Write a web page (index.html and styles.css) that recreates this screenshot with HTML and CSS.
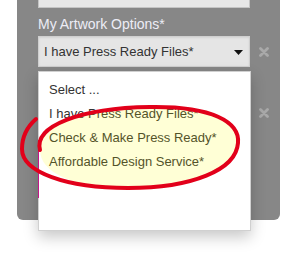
FILE: index.html
```html
<!DOCTYPE html>
<html>
<head>
<meta charset="utf-8">
<link rel="stylesheet" href="styles.css">
</head>
<body>
<div class="page">
  <div class="panel">
    <div class="field-top"></div>
    <div class="label">My Artwork Options*</div>
    <div class="row">
      <div class="select">
        <span class="select-text">I have Press Ready Files*</span>
        <svg class="caret" width="9" height="5" viewBox="0 0 9 5"><path d="M0 0H9L4.5 5Z" fill="#111"/></svg>
      </div>
      <svg class="remove" width="10" height="10" viewBox="0 0 10 10"><path d="M1.5 1.5L8.5 8.5M8.5 1.5L1.5 8.5" stroke="#a9a9a9" stroke-width="2.8" stroke-linecap="round"/></svg>
    </div>
    <div class="row row2">
      <div class="select hidden-select"></div>
      <svg class="remove" width="10" height="10" viewBox="0 0 10 10"><path d="M1.5 1.5L8.5 8.5M8.5 1.5L1.5 8.5" stroke="#a9a9a9" stroke-width="2.8" stroke-linecap="round"/></svg>
    </div>
    <div class="textarea"></div>
  </div>

  <ul class="menu">
    <li>Select ...</li>
    <li>I have Press Ready Files*</li>
    <li>Check &amp; Make Press Ready*</li>
    <li>Affordable Design Service*</li>
  </ul>

  <svg class="annotation" width="293" height="255" viewBox="0 0 293 255">
    <path d="M40 150 C 34 126 80 108 150 107 C 212 106 240 122 238 143 C 236 170 192 188 128 188 C 72 188 40 172 40 150 Z"
          fill="#ffff00" fill-opacity="0.16" stroke="none"/>
    <path d="M40 150 C 34 126 80 108 150 107 C 212 106 240 122 238 143 C 236 170 192 188 128 188 C 66 188 22 172 22 149 C 22 136 28 126 36 119"
          fill="none" stroke="#e2001a" stroke-width="4" stroke-linecap="round"/>
  </svg>
</div>
</body>
</html>
```
FILE: styles.css
```css
html, body {
  margin: 0;
  padding: 0;
  background: #ffffff;
}

.page {
  position: relative;
  width: 293px;
  height: 255px;
  overflow: hidden;
  font-family: "Liberation Sans", Arial, sans-serif;
}

.panel {
  margin-left: 17px;
  width: 263px;
  height: 220px;
  box-sizing: border-box;
  background: #878787;
  border-radius: 0 0 6px 6px;
  padding: 0 0 0 21px;
  display: flex;
  flex-direction: column;
}

.field-top {
  width: 212px;
  height: 8px;
  box-sizing: border-box;
  background: #e7e7e7;
  border: 1px solid #c4c4c4;
  border-top: none;
}

.label {
  margin-top: 7px;
  height: 21px;
  font-size: 14px;
  line-height: 18px;
  color: #ededf6;
}

.row {
  display: flex;
  align-items: center;
  gap: 9px;
}

.select {
  width: 212px;
  height: 31px;
  box-sizing: border-box;
  background: #e5e5e5;
  border: 1px solid #cfcfcf;
  box-shadow: inset 0 1px 2px rgba(0,0,0,0.08);
  display: flex;
  align-items: center;
  justify-content: space-between;
  padding: 0 6px 0 5px;
}

.select-text {
  font-size: 13px;
  color: #333;
}

.caret {
  margin-top: 1px;
}

.remove {
  flex: none;
}

.row2 {
  margin-top: 30px;
}

.hidden-select {
  background: #e5e5e5;
}

.textarea {
  position: relative;
  z-index: 2;
  margin-top: 12px;
  width: 212px;
  height: 58px;
  box-sizing: border-box;
  background: transparent;
  border-left: 1px solid #c4168a;
}

.menu {
  position: absolute;
  z-index: 1;
  left: 38px;
  top: 71px;
  width: 213px;
  height: 160px;
  box-sizing: border-box;
  margin: 0;
  padding: 6px 0 0 10px;
  list-style: none;
  background: #fff;
  border: 1px solid #d0d0d0;
  box-shadow: 0 6px 14px rgba(0,0,0,0.22);
  font-size: 13px;
  line-height: 24px;
  color: #333;
}

.menu li {
  white-space: nowrap;
}

.annotation {
  position: absolute;
  z-index: 3;
  left: 0;
  top: 0;
}
```
